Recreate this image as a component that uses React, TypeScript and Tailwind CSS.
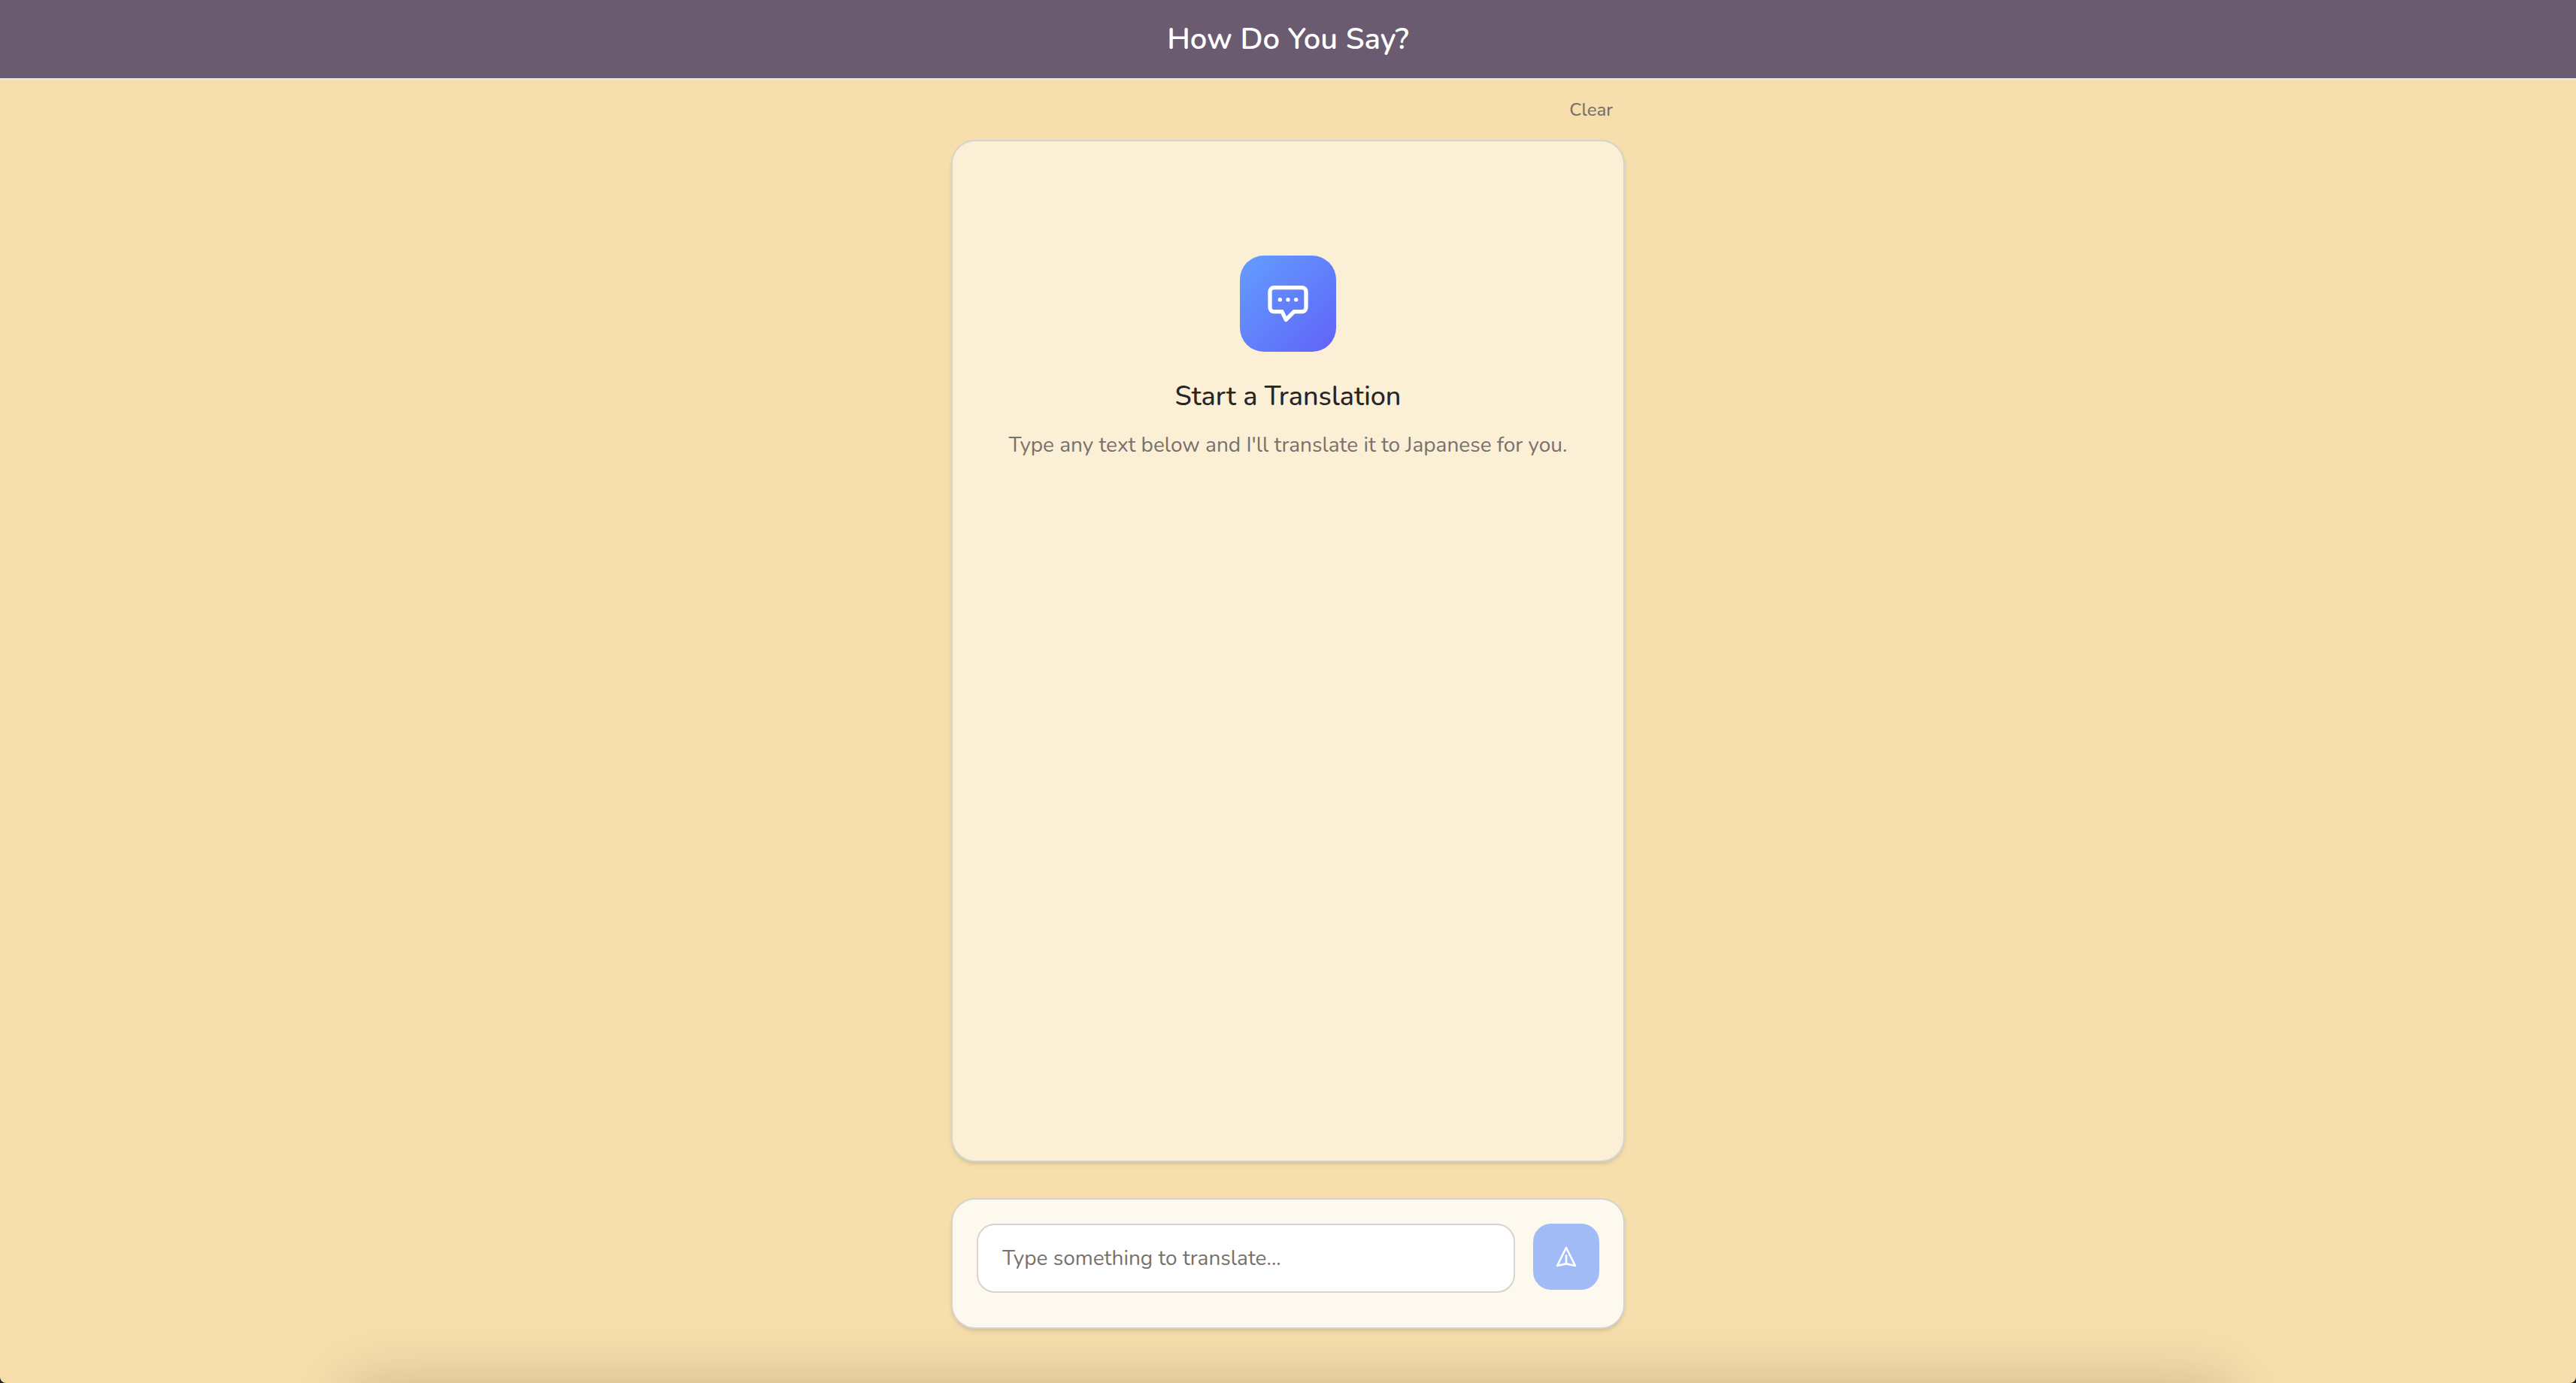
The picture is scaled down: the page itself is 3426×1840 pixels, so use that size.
export default function App() {
  return (
    <div className="bg-[#222322] font-['Nunito','Lato',sans-serif]">
      <div className="relative flex h-screen flex-col overflow-hidden rounded-b-lg bg-[#f7dfad]">
        <header className="flex shrink-0 justify-center border-b-2 border-gray-200 bg-[#6b5b70] py-6">
          <h1 className="text-[40px] leading-14 font-semibold text-white">How Do You Say?</h1>
        </header>

        <main className="mx-auto flex min-h-0 w-full max-w-4xl flex-1 flex-col pt-2 pb-18">
          <div className="flex justify-end py-1">
            <button type="button" className="rounded-xl px-4 py-2 text-2xl leading-10 font-medium text-stone-500">
              Clear
            </button>
          </div>

          <section className="mt-2 flex flex-1 flex-col items-center rounded-[32px] border-2 border-stone-300 bg-[#fbefd6] pt-38 text-center shadow-md">
            <div className="flex size-32 items-center justify-center rounded-[32px] bg-linear-to-br from-[#629eff] to-[#6161f8]">
              <svg viewBox="0 0 24 24" className="size-16 text-white" fill="none" stroke="currentColor" strokeWidth="2" strokeLinecap="round" strokeLinejoin="round" aria-hidden="true">
                <path d="M8 10h.01M12 10h.01M16 10h.01M9 16H5a2 2 0 01-2-2V6a2 2 0 012-2h14a2 2 0 012 2v8a2 2 0 01-2 2h-4l-4 4-2-4z" />
              </svg>
            </div>
            <h2 className="mt-8 text-4xl leading-14 font-medium text-stone-800">Start a Translation</h2>
            <p className="mt-3 text-[28px] leading-12 text-stone-500">
              Type any text below and I'll translate it to Japanese for you.
            </p>
          </section>

          <form
            className="mt-12 flex shrink-0 items-start gap-6 rounded-[32px] border-2 border-stone-300 bg-[#fdf9ee] px-8 pt-8 pb-[46px] shadow-md"
            onSubmit={(event) => event.preventDefault()}
          >
            <input
              type="text"
              aria-label="Text to translate"
              placeholder="Type something to translate..."
              className="h-23 min-w-0 flex-1 rounded-3xl border-2 border-stone-300 bg-white px-8 text-[28px] text-stone-800 outline-none placeholder:text-stone-500"
            />
            <button type="submit" aria-label="Translate" className="flex size-22 shrink-0 items-center justify-center rounded-3xl bg-[#a1bbf6] text-white">
              <svg viewBox="0 0 24 24" className="size-8" fill="none" stroke="currentColor" strokeWidth="2" strokeLinecap="round" strokeLinejoin="round" aria-hidden="true">
                <path d="M12 19l9 2-9-18-9 18 9-2zm0 0v-8" />
              </svg>
            </button>
          </form>
        </main>

        <div className="pointer-events-none absolute inset-x-[13.5%] top-full h-40 shadow-[0_0_80px_rgba(70,60,30,0.24)]" aria-hidden="true" />
      </div>
    </div>
  );
}
